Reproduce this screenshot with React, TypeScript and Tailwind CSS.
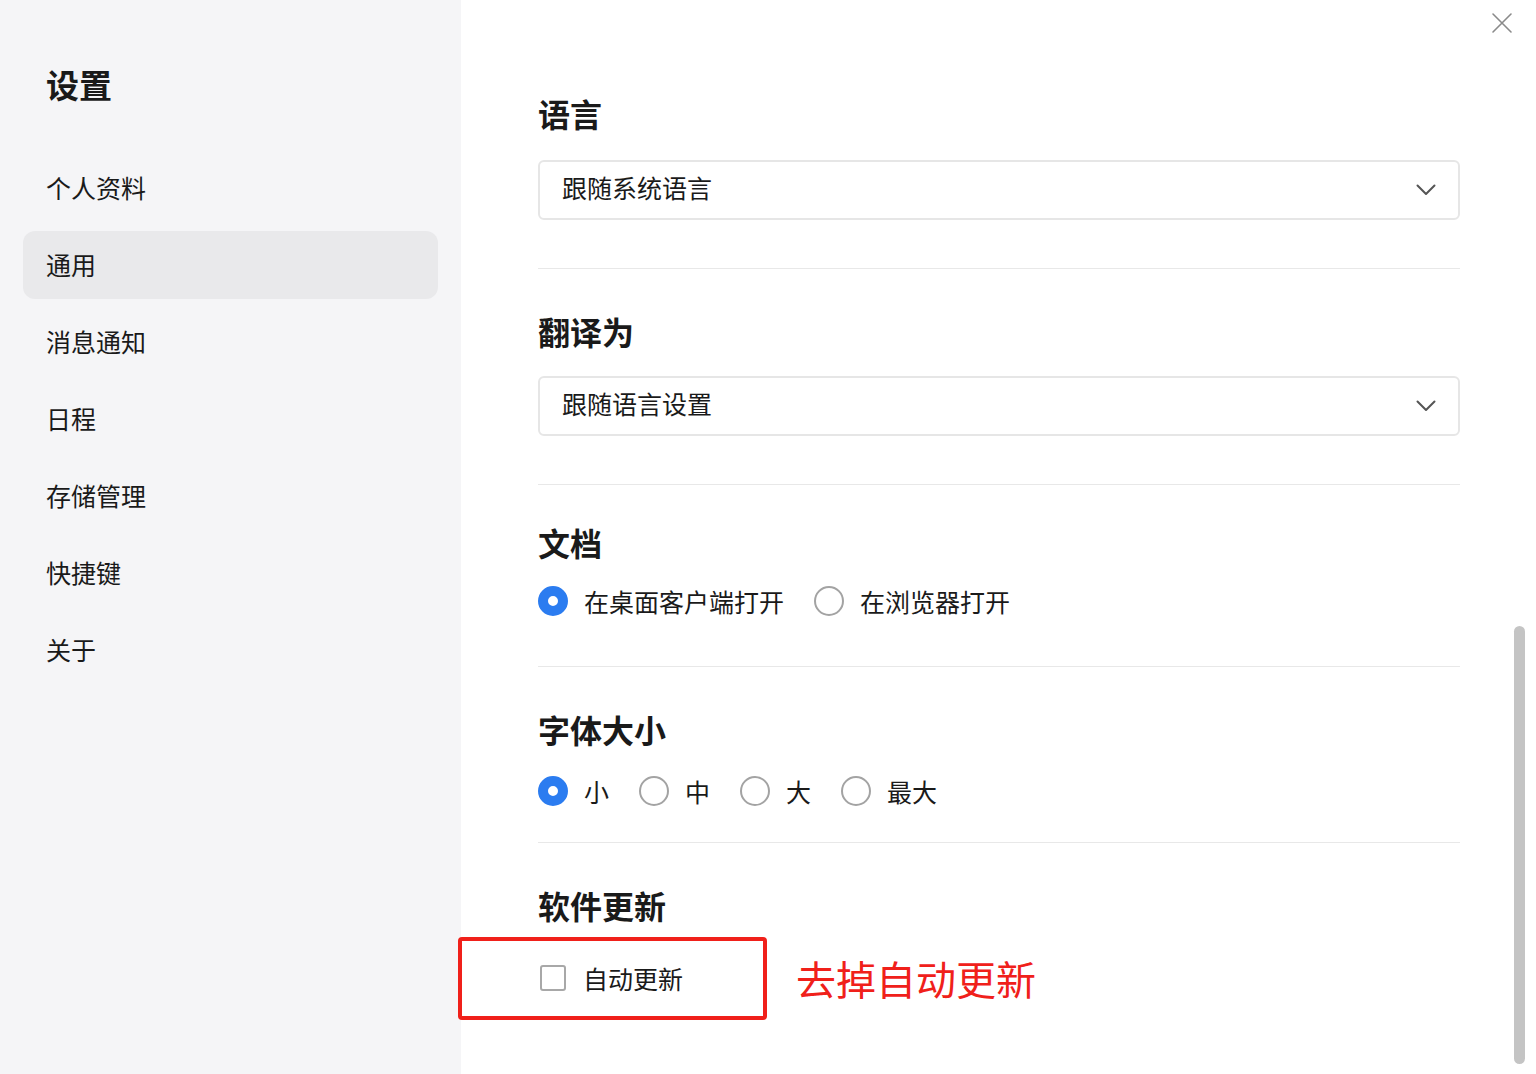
import { useState } from "react";

const navItems = ["个人资料", "通用", "消息通知", "日程", "存储管理", "快捷键", "关于"];

function Chevron() {
  return (
    <svg width="20" height="12" viewBox="0 0 20 12" fill="none">
      <path d="M1.5 1.5 10 10l8.5-8.5" stroke="#555" strokeWidth="2" strokeLinecap="round" strokeLinejoin="round" />
    </svg>
  );
}

function Select({ value }: { value: string }) {
  return (
    <div className="h-[60px] rounded-md border-2 border-[#e6e6e6] bg-white flex items-center justify-between pl-[22px] pr-[22px]">
      <span className="text-[25px] leading-[30px] pb-[6px] text-[#1a1a1a]">{value}</span>
      <Chevron />
    </div>
  );
}

function Radio({ checked, label }: { checked: boolean; label: string }) {
  return (
    <div className="flex items-center gap-4">
      {checked ? (
        <span className="w-[30px] h-[30px] rounded-full border-[10px] border-[#2b7cf0] bg-white" />
      ) : (
        <span className="w-[30px] h-[30px] rounded-full border-2 border-[#a3a3a3] bg-white" />
      )}
      <span className="text-[25px] leading-[40px] text-[#1a1a1a]">{label}</span>
    </div>
  );
}

function Heading({ children }: { children: string }) {
  return <h2 className="text-[32px] leading-[40px] font-bold text-[#1a1a1a]">{children}</h2>;
}

export default function App() {
  const [active] = useState("通用");

  return (
    <div
      className="flex w-[1536px] h-[1074px] overflow-hidden bg-white"
      style={{ fontFamily: '"Noto Sans CJK SC", "Noto Sans", sans-serif' }}
    >
      {/* Sidebar */}
      <aside className="w-[461px] shrink-0 bg-[#f5f5f7] pt-[62px] px-[23px]">
        <h1 className="pl-[23px] text-[33px] leading-[44px] font-bold text-[#1a1a1a]">设置</h1>
        <nav className="mt-[48px] flex flex-col gap-[9px]">
          {navItems.map((item) => (
            <div
              key={item}
              className={`h-[68px] rounded-xl pl-[23px] flex items-center text-[25px] text-[#1a1a1a] ${
                item === active ? "bg-[#e9e9eb]" : ""
              }`}
            >
              {item}
            </div>
          ))}
        </nav>
      </aside>

      {/* Main */}
      <main className="relative flex-1 pl-[77px] pr-[76px] pt-[93px]">
        <button className="absolute top-[12px] right-[23px] w-[22px] h-[22px] flex items-center justify-center">
          <svg width="22" height="22" viewBox="0 0 22 22" fill="none">
            <path d="M2 2l18 18M20 2 2 20" stroke="#8a8a8a" strokeWidth="1.6" strokeLinecap="round" />
          </svg>
        </button>

        {/* Scrollbar */}
        <div className="absolute right-[11px] top-[626px] w-[11px] h-[438px] rounded-full bg-[#c4c4c4]" />

        <section className="pb-[48px] border-b border-[#e8e8e8]">
          <Heading>语言</Heading>
          <div className="mt-[27px]">
            <Select value="跟随系统语言" />
          </div>
        </section>

        <section className="pt-[42px] pb-[48px] border-b border-[#e8e8e8]">
          <Heading>翻译为</Heading>
          <div className="mt-[25px]">
            <Select value="跟随语言设置" />
          </div>
        </section>

        <section className="pt-[37px] pb-[45px] border-b border-[#e8e8e8]">
          <Heading>文档</Heading>
          <div className="mt-[19px] flex items-center gap-[30px]">
            <Radio checked label="在桌面客户端打开" />
            <Radio checked={false} label="在浏览器打开" />
          </div>
        </section>

        <section className="pt-[42px] pb-[31px] border-b border-[#e8e8e8]">
          <Heading>字体大小</Heading>
          <div className="mt-[22px] flex items-center gap-[30px]">
            <Radio checked label="小" />
            <Radio checked={false} label="中" />
            <Radio checked={false} label="大" />
            <Radio checked={false} label="最大" />
          </div>
        </section>

        <section className="pt-[42px]">
          <Heading>软件更新</Heading>
          <div className="mt-[29px] flex items-center">
            <div className="relative flex items-center gap-[17px] h-[40px] pl-[2px]">
              <span className="w-[26px] h-[26px] rounded-[3px] border-2 border-[#a8a8a8] bg-white" />
              <span className="text-[25px] leading-[40px] text-[#1a1a1a]">自动更新</span>
              <div className="absolute left-[-80px] top-[-21px] w-[309px] h-[83px] rounded-[4px] border-[4px] border-[#f0201a]" />
            </div>
            <span className="ml-[113px] text-[40px] leading-[48px] text-[#f0201a]">去掉自动更新</span>
          </div>
        </section>
      </main>
    </div>
  );
}
